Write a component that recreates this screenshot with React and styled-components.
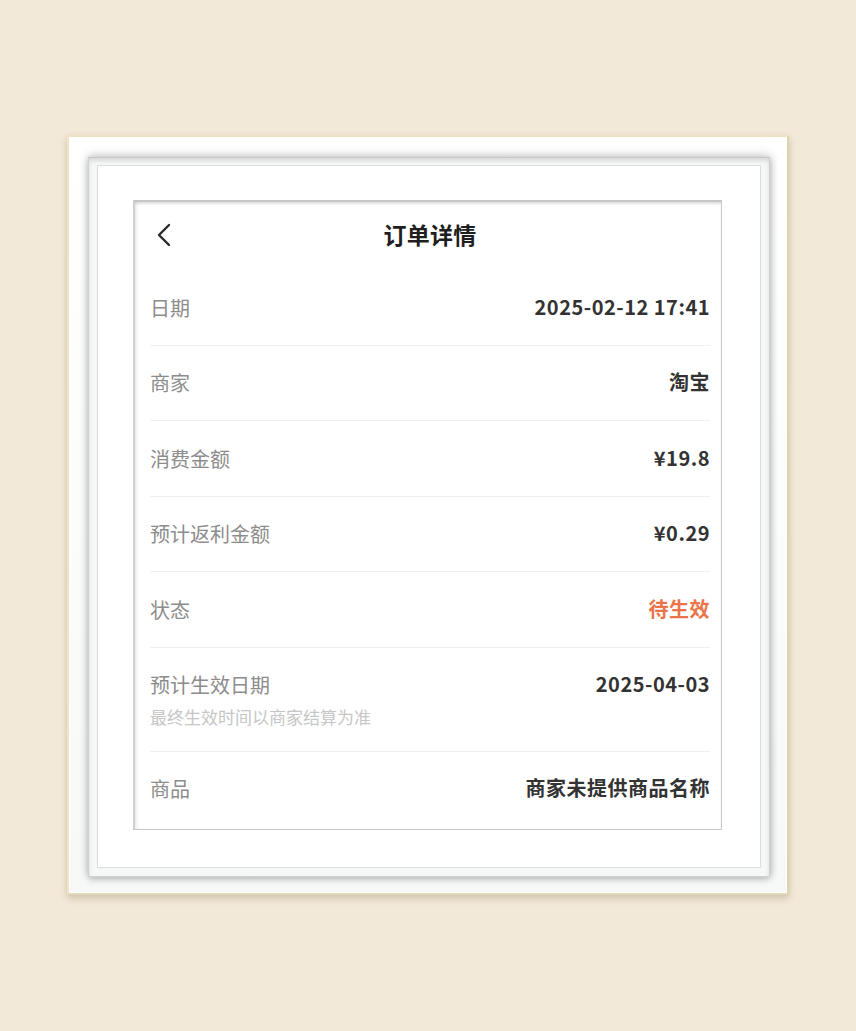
import React from "react";
import styled, { createGlobalStyle } from "styled-components";

const Global = createGlobalStyle`
  html, body { margin: 0; padding: 0; }
  body {
    background: #f3e9d9;
    font-family: "Noto Sans CJK SC", "Noto Sans", sans-serif;
  }
`;

const Page = styled.div`
  width: 856px;
  height: 1031px;
  display: flex;
  align-items: flex-start;
  justify-content: flex-start;
  padding: 135px 0 0 67px;
  box-sizing: border-box;
`;

const Frame = styled.div`
  width: 722px;
  height: 760px;
  box-sizing: border-box;
  border: 2px solid #efe2c6;
  border-right-color: #dcd3b0;
  border-bottom-color: #e2d8bc;
  background: linear-gradient(180deg, #ffffff 0%, #f7f9f9 100%);
  box-shadow: 0 3px 7px rgba(90, 70, 30, 0.25), inset 0 0 0 1px #fffdf4;
  padding: 20px 17px 16px 19px;
  display: flex;
`;

const Groove = styled.div`
  flex: 1;
  box-sizing: border-box;
  background: #f6f7f7;
  border: 1px solid #cfd2d3;
  border-top-color: #c4c8c9;
  box-shadow: inset 0 3px 4px rgba(0, 0, 0, 0.12), 0 -4px 9px rgba(0, 0, 0, 0.1),
    -3px 0 7px rgba(0, 0, 0, 0.08), 3px 0 7px rgba(0, 0, 0, 0.1), 0 4px 6px rgba(0, 0, 0, 0.12);
  padding: 7px 8px 8px 8px;
  display: flex;
`;

const Mat = styled.div`
  flex: 1;
  box-sizing: border-box;
  background: #ffffff;
  border: 1px solid #dcdede;
  padding: 34px 38px 37px 35px;
  display: flex;
`;

const Panel = styled.div`
  flex: 1;
  box-sizing: border-box;
  background: #ffffff;
  border: 1px solid #c9c9c9;
  border-left: 2px solid #cfcfcf;
  border-top: 2px solid #c6c6c6;
  box-shadow: inset 0 3px 3px -1px rgba(0, 0, 0, 0.12), inset 3px 0 4px -2px rgba(0, 0, 0, 0.1);
  display: flex;
  flex-direction: column;
  padding: 0 11px 0 15px;
  overflow: hidden;
`;

const Header = styled.div`
  position: relative;
  height: 68px;
  display: flex;
  align-items: center;
  justify-content: center;
`;

const Back = styled.div`
  position: absolute;
  left: 6px;
  top: 21px;
  width: 16px;
  height: 24px;
  display: flex;
`;

const Title = styled.div`
  font-size: 23px;
  line-height: 30px;
  font-weight: 700;
  color: #1f1f1f;
  letter-spacing: 0.3px;
  margin: 0 0 4px 0;
`;

const Row = styled.div`
  display: flex;
  justify-content: space-between;
  align-items: flex-start;
  padding: 23.5px 0 23px 0;
  border-bottom: ${(p) => (p.last ? "none" : "1px solid #efefef")};
`;

const LabelCol = styled.div`
  display: flex;
  flex-direction: column;
`;

const Label = styled.div`
  font-size: 20px;
  line-height: 28px;
  color: #8c8c8c;
`;

const Sub = styled.div`
  font-size: 17px;
  line-height: 22px;
  color: #c6c6c6;
  margin-top: 6.5px;
`;

const Value = styled.div`
  font-size: 20px;
  line-height: 28px;
  font-weight: 700;
  color: ${(p) => (p.accent ? "#ea7448" : "#333333")};
  letter-spacing: 0.5px;
  margin-top: -1px;
`;

const rows = [
  { label: "日期", value: "2025-02-12 17:41" },
  { label: "商家", value: "淘宝" },
  { label: "消费金额", value: "¥19.8" },
  { label: "预计返利金额", value: "¥0.29" },
  { label: "状态", value: "待生效", accent: true },
  { label: "预计生效日期", value: "2025-04-03", sub: "最终生效时间以商家结算为准" },
  { label: "商品", value: "商家未提供商品名称" },
];

export default function App() {
  return (
    <>
      <Global />
      <Page>
        <Frame>
          <Groove>
            <Mat>
              <Panel>
                <Header>
                  <Back>
                    <svg width="16" height="24" viewBox="0 0 16 24">
                      <polyline
                        points="13,2 3,12 13,22"
                        fill="none"
                        stroke="#2a2a2a"
                        strokeWidth="2.4"
                        strokeLinecap="round"
                        strokeLinejoin="round"
                      />
                    </svg>
                  </Back>
                  <Title>订单详情</Title>
                </Header>
                {rows.map((r, i) => (
                  <Row key={r.label} last={i === rows.length - 1}>
                    <LabelCol>
                      <Label>{r.label}</Label>
                      {r.sub && <Sub>{r.sub}</Sub>}
                    </LabelCol>
                    <Value accent={r.accent}>{r.value}</Value>
                  </Row>
                ))}
              </Panel>
            </Mat>
          </Groove>
        </Frame>
      </Page>
    </>
  );
}
